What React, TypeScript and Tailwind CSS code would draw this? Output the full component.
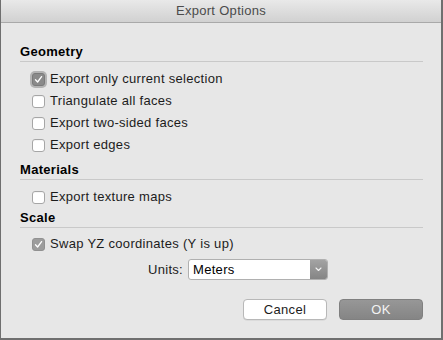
import React from "react";

function Check({ color = "#ffffff" }: { color?: string }) {
  return (
    <svg width="9" height="9" viewBox="0 0 9 9" fill="none">
      <path d="M1.5 4.8 L3.6 7 L7.6 1.6" stroke={color} strokeWidth="1.3" strokeLinecap="round" strokeLinejoin="round" />
    </svg>
  );
}

function Box({ state }: { state: "off" | "focus" | "on" }) {
  if (state === "off") {
    return <div className="w-[13px] h-[13px] rounded-[3px] border border-[#a6a6a6] bg-white shadow-[inset_0_1px_0_rgba(0,0,0,0.04)]" />;
  }
  if (state === "focus") {
    return (
      <div className="w-[13px] h-[13px] rounded-[3px] bg-[#8a8a8a] border border-[#7a7a7a] flex items-center justify-center shadow-[0_0_0_2px_#b3b3b3]">
        <Check />
      </div>
    );
  }
  return (
    <div className="w-[13px] h-[13px] rounded-[3px] bg-[#9d9d9d] border border-[#919191] flex items-center justify-center">
      <Check />
    </div>
  );
}

function Row({ label, state }: { label: string; state: "off" | "focus" | "on" }) {
  return (
    <div className="h-[22px] flex items-center pl-[12px] gap-[5px]">
      <Box state={state} />
      <span className="text-[13px] leading-[16px] text-[#1c1c1c]">{label}</span>
    </div>
  );
}

function Heading({ text }: { text: string }) {
  return (
    <div className="h-[18px] border-b border-[#c9c9c9] mr-[18px]">
      <div className="text-[13px] leading-[16px] font-bold text-black">{text}</div>
    </div>
  );
}

export default function App() {
  return (
    <div
      className="w-[443px] h-[340px] bg-[#e7e7e7] border-l border-r-2 border-b-2 border-[#6f6f6f] flex flex-col tracking-[0.3px]"
      style={{ fontFamily: '"Liberation Sans", Arial, sans-serif' }}
    >
      <div className="h-[23px] shrink-0 bg-gradient-to-b from-[#e9e9e9] to-[#d1d1d1] border-b border-[#a9a9a9] flex items-center justify-center">
        <span className="text-[13px] leading-[16px] text-[#4b4b4b]">Export Options</span>
      </div>
      <div className="pl-[19px] flex flex-col">
        <div className="mt-[21px]">
          <Heading text="Geometry" />
        </div>
        <div className="mt-[6px] flex flex-col">
          <Row label="Export only current selection" state="focus" />
          <Row label="Triangulate all faces" state="off" />
          <Row label="Export two-sided faces" state="off" />
          <Row label="Export edges" state="off" />
        </div>
        <div className="mt-[6px]">
          <Heading text="Materials" />
        </div>
        <div className="mt-[6px]">
          <Row label="Export texture maps" state="off" />
        </div>
        <div className="mt-[2px]">
          <Heading text="Scale" />
        </div>
        <div className="mt-[5px]">
          <Row label="Swap YZ coordinates (Y is up)" state="on" />
        </div>
        <div className="mt-[4px] flex items-center pl-[128px] gap-[5px]">
          <span className="text-[13px] leading-[16px] text-[#1c1c1c]">Units:</span>
          <div className="w-[140px] h-[21px] flex rounded-[3px] border border-[#b0b0b0] bg-white overflow-hidden">
            <div className="flex-1 flex items-center pl-[4px] text-[13px] leading-[16px] text-black">Meters</div>
            <div className="w-[17px] bg-gradient-to-b from-[#a3a3a3] to-[#858585] flex items-center justify-center">
              <svg width="7" height="5" viewBox="0 0 7 5" fill="none">
                <path d="M1 1 L3.5 3.5 L6 1" stroke="#f2f2f2" strokeWidth="1.1" strokeLinecap="round" strokeLinejoin="round" />
              </svg>
            </div>
          </div>
        </div>
        <div className="mt-[19px] flex justify-end gap-[12px] pr-[18px]">
          <div className="w-[84px] h-[21px] rounded-[4px] bg-white border border-[#b8b8b8] flex items-center justify-center text-[13px] leading-[16px] text-[#1c1c1c] shadow-[0_0.5px_0_rgba(0,0,0,0.1)]">
            Cancel
          </div>
          <div className="w-[84px] h-[21px] rounded-[4px] bg-gradient-to-b from-[#979797] to-[#858585] border border-[#808080] flex items-center justify-center text-[13px] leading-[16px] text-[#f3f3f3]">
            OK
          </div>
        </div>
      </div>
    </div>
  );
}
